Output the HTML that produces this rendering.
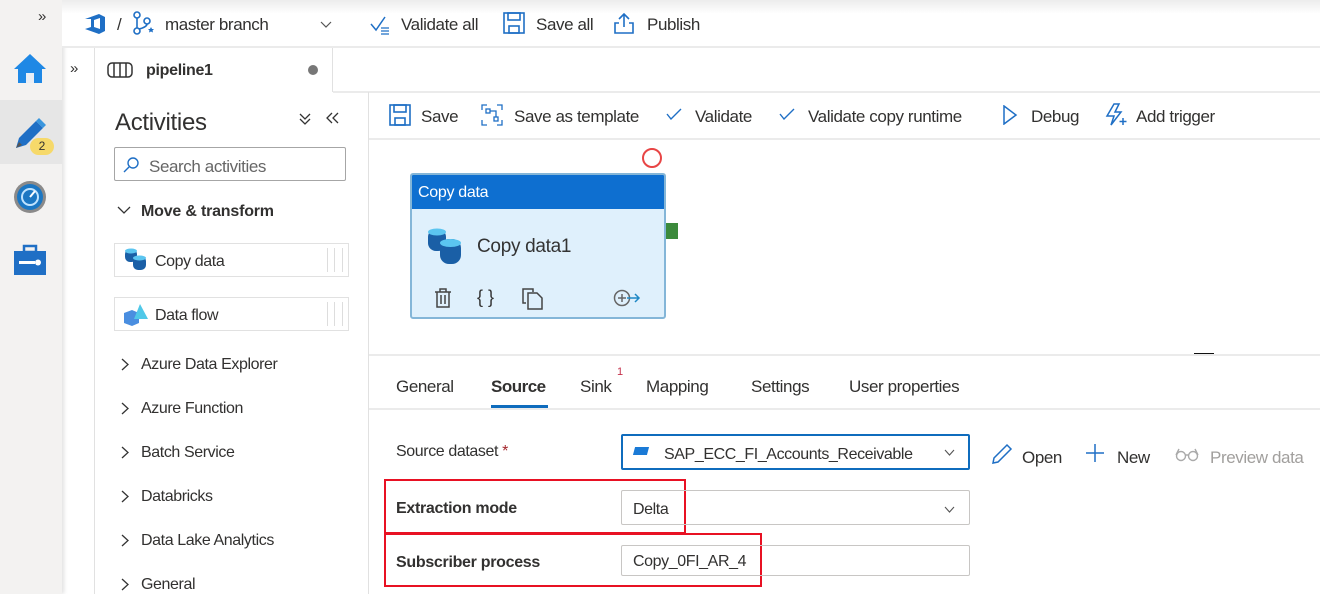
<!DOCTYPE html>
<html><head><meta charset="utf-8"><style>
*{margin:0;padding:0;box-sizing:border-box}
body{width:1320px;height:594px;overflow:hidden;background:#fff;font-family:"Segoe UI","Liberation Sans",sans-serif;color:#323130;position:relative}
.a{position:absolute;white-space:nowrap}
.t{font-size:17px;letter-spacing:-0.4px;margin-top:2px}
svg{position:absolute}
</style></head><body>
<!-- left rail -->
<div class="a" style="left:0;top:0;width:62px;height:594px;background:#f3f2f1;box-shadow:2px 0 4px rgba(0,0,0,.12)"></div>
<div class="a" style="left:0;top:100px;width:62px;height:64px;background:#e6e6e6"></div>
<div class="a" style="left:38px;top:8px;font-size:15px">»</div>
<svg style="left:13px;top:52px" width="34" height="32" viewBox="0 0 34 32"><path d="M17 2 L33 17 L29 17 L29 31 L5 31 L5 17 L1 17Z" fill="#1e88e5"/><rect x="13" y="21" width="8" height="10" fill="#e8eef6"/></svg>
<svg style="left:12px;top:116px" width="36" height="36" viewBox="0 0 36 36"><path d="M4 32 L7 22 L24 5 L31 12 L14 29Z" fill="#1f6fc5"/><path d="M24 5 L27 2 L34 9 L31 12Z" fill="#3a96dd"/><path d="M4 32 L7 26 L10 29Z" fill="#555"/></svg>
<div class="a" style="left:30px;top:138px;width:24px;height:17px;border-radius:9px;background:#f6d96a;font-size:12px;text-align:center;line-height:17px">2</div>
<svg style="left:13px;top:180px" width="34" height="34" viewBox="0 0 34 34"><circle cx="17" cy="17" r="16" fill="#8a8a8a"/><circle cx="17" cy="17" r="13" fill="#1c77c3"/><circle cx="17" cy="17" r="8" fill="none" stroke="#bfe3ff" stroke-width="2"/><path d="M17 17 L22 11" stroke="#fff" stroke-width="2"/></svg>
<svg style="left:13px;top:244px" width="34" height="32" viewBox="0 0 34 32"><rect x="11" y="2" width="12" height="6" fill="none" stroke="#1f6fc5" stroke-width="2.5"/><rect x="1" y="7" width="32" height="24" fill="#1f6fc5"/><rect x="6" y="17" width="16" height="3" fill="#fff"/><circle cx="25" cy="18.5" r="3" fill="#fff"/></svg>

<!-- top bar -->
<div class="a" style="left:62px;top:0;width:1258px;height:48px;background:linear-gradient(#ececec,#fff 30%);border-bottom:2px solid #ebebeb"></div>
<svg style="left:83px;top:13px" width="24" height="22" viewBox="0 0 24 22"><path d="M2 6 L16 1 L22 4 L22 18 L16 21 L2 16 L8 14 L8 6Z" fill="#1f6fc5"/><path d="M11 7 L17 5 L17 16 L11 14Z" fill="#fff"/></svg>
<div class="a t" style="left:117px;top:13px">/</div>
<svg style="left:132px;top:11px" width="24" height="24" viewBox="0 0 24 24" fill="none" stroke="#1f6fc5" stroke-width="1.6"><circle cx="5" cy="4" r="3"/><circle cx="5" cy="20" r="3"/><circle cx="15" cy="10" r="3"/><path d="M5 7 V17 M15 13 Q15 16 7 18"/><path d="M19 16 l1 2 2 0 -1.5 1.5 .5 2 -2-1 -2 1 .5-2 -1.5-1.5 2 0z" fill="#1f6fc5" stroke="none"/></svg>
<div class="a t" style="left:165px;top:13px">master branch</div>
<svg style="left:320px;top:21px" width="12" height="8" viewBox="0 0 12 8" fill="none" stroke="#555" stroke-width="1.2"><path d="M1 1 L6 6 L11 1"/></svg>
<svg style="left:370px;top:15px" width="22" height="20" viewBox="0 0 22 20" fill="none" stroke="#1f6fc5" stroke-width="1.5"><path d="M1 9 L6 15 L15 2"/><path d="M11 13h8M11 16h8M11 19h8" stroke-width="1.2"/></svg>
<div class="a t" style="left:401px;top:13px">Validate all</div>
<svg style="left:503px;top:12px" width="22" height="22" viewBox="0 0 22 22" fill="none" stroke="#1f6fc5" stroke-width="1.6"><rect x="1" y="1" width="20" height="20"/><rect x="5" y="1" width="12" height="7"/><rect x="6" y="14" width="10" height="7"/></svg>
<div class="a t" style="left:536px;top:13px">Save all</div>
<svg style="left:613px;top:12px" width="22" height="22" viewBox="0 0 22 22" fill="none" stroke="#1f6fc5" stroke-width="1.6"><path d="M11 15 V2 M6 7 L11 2 L16 7 M6 11 H2 V21 H20 V11 H16"/></svg>
<div class="a t" style="left:647px;top:13px">Publish</div>

<!-- second row -->
<div class="a" style="left:62px;top:48px;width:33px;height:546px;border-right:1px solid #e1e1e1"></div>
<div class="a" style="left:70px;top:60px;font-size:15px">»</div>
<div class="a" style="left:95px;top:48px;width:238px;height:44px;border-right:1px solid #e1e1e1"></div>
<div class="a" style="left:333px;top:91px;width:987px;height:2px;background:#ebebeb"></div>
<svg style="left:107px;top:62px" width="26" height="16" viewBox="0 0 26 16" fill="none" stroke="#333" stroke-width="1.5"><rect x="1" y="1" width="24" height="14" rx="4"/><path d="M7 1v14M13 1v14M19 1v14"/></svg>
<div class="a" style="left:146px;top:62px;font-size:16px;font-weight:bold;letter-spacing:-.3px">pipeline1</div>
<div class="a" style="left:308px;top:65px;width:10px;height:10px;border-radius:50%;background:#777"></div>

<!-- activities panel -->
<div class="a" style="left:368px;top:92px;width:1px;height:502px;background:#e1e1e1"></div>
<div class="a" style="left:115px;top:109px;font-size:24px;letter-spacing:-.3px">Activities</div>
<svg style="left:299px;top:112px" width="12" height="14" viewBox="0 0 12 14" fill="none" stroke="#333" stroke-width="1.3"><path d="M1 2 L6 7 L11 2 M1 7 L6 12 L11 7"/></svg>
<svg style="left:325px;top:112px" width="14" height="12" viewBox="0 0 14 12" fill="none" stroke="#333" stroke-width="1.3"><path d="M7 1 L2 6 L7 11 M13 1 L8 6 L13 11"/></svg>
<div class="a" style="left:114px;top:147px;width:232px;height:34px;border:1px solid #a6a6a6;border-radius:2px"></div>
<svg style="left:123px;top:157px" width="16" height="16" viewBox="0 0 16 16" fill="none" stroke="#1f6fc5" stroke-width="1.4"><circle cx="10" cy="6" r="5"/><path d="M6 10 L1 15"/></svg>
<div class="a t" style="left:149px;top:155px;color:#666">Search activities</div>
<svg style="left:117px;top:206px" width="14" height="9" viewBox="0 0 14 9" fill="none" stroke="#333" stroke-width="1.3"><path d="M1 1 L7 7 L13 1"/></svg>
<div class="a t" style="left:141px;top:201px;font-weight:bold;font-size:16px;letter-spacing:-.2px">Move &amp; transform</div>
<div class="a" style="left:114px;top:243px;width:235px;height:34px;border:1px solid #e1e1e1"></div>
<div class="a" style="left:114px;top:297px;width:235px;height:34px;border:1px solid #e1e1e1"></div>
<div class="a" style="left:327px;top:248px;width:16px;height:24px;border-left:1px solid #ddd;border-right:1px solid #ddd"><div style="margin-left:6px;width:1px;height:24px;background:#ddd"></div></div>
<div class="a" style="left:327px;top:302px;width:16px;height:24px;border-left:1px solid #ddd;border-right:1px solid #ddd"><div style="margin-left:6px;width:1px;height:24px;background:#ddd"></div></div>
<svg style="left:124px;top:248px" width="24" height="24" viewBox="0 0 24 24"><rect x="1" y="1" width="12" height="13" rx="5" fill="#1a5fa6"/><ellipse cx="7" cy="3" rx="6" ry="2.5" fill="#5bc5f0"/><rect x="9" y="8" width="13" height="14" rx="5" fill="#1a5fa6"/><ellipse cx="15.5" cy="10" rx="6.5" ry="2.5" fill="#5bc5f0"/></svg>
<div class="a t" style="left:155px;top:251px;font-size:16px">Copy data</div>
<svg style="left:122px;top:301px" width="28" height="26" viewBox="0 0 28 26"><path d="M2 12 L10 9 L17 12 L17 22 L10 25 L2 22Z" fill="#4a8ee0"/><path d="M18 3 L26 18 L12 18Z" fill="#50c8e8"/></svg>
<div class="a t" style="left:155px;top:305px;font-size:16px">Data flow</div>
<svg style="left:121px;top:358px" width="8" height="13" viewBox="0 0 8 13" fill="none" stroke="#333" stroke-width="1.3"><path d="M1 1 L7 6.5 L1 12"/></svg><div class="a t" style="left:141px;top:354px;font-size:16px">Azure Data Explorer</div>
<svg style="left:121px;top:402px" width="8" height="13" viewBox="0 0 8 13" fill="none" stroke="#333" stroke-width="1.3"><path d="M1 1 L7 6.5 L1 12"/></svg><div class="a t" style="left:141px;top:398px;font-size:16px">Azure Function</div>
<svg style="left:121px;top:446px" width="8" height="13" viewBox="0 0 8 13" fill="none" stroke="#333" stroke-width="1.3"><path d="M1 1 L7 6.5 L1 12"/></svg><div class="a t" style="left:141px;top:442px;font-size:16px">Batch Service</div>
<svg style="left:121px;top:490px" width="8" height="13" viewBox="0 0 8 13" fill="none" stroke="#333" stroke-width="1.3"><path d="M1 1 L7 6.5 L1 12"/></svg><div class="a t" style="left:141px;top:486px;font-size:16px">Databricks</div>
<svg style="left:121px;top:534px" width="8" height="13" viewBox="0 0 8 13" fill="none" stroke="#333" stroke-width="1.3"><path d="M1 1 L7 6.5 L1 12"/></svg><div class="a t" style="left:141px;top:530px;font-size:16px">Data Lake Analytics</div>
<svg style="left:121px;top:578px" width="8" height="13" viewBox="0 0 8 13" fill="none" stroke="#333" stroke-width="1.3"><path d="M1 1 L7 6.5 L1 12"/></svg><div class="a t" style="left:141px;top:574px;font-size:16px">General</div>

<!-- toolbar -->
<div class="a" style="left:369px;top:138px;width:951px;height:2px;background:#ebebeb"></div>
<svg style="left:389px;top:104px" width="22" height="22" viewBox="0 0 22 22" fill="none" stroke="#1f6fc5" stroke-width="1.6"><rect x="1" y="1" width="20" height="20"/><rect x="5" y="1" width="12" height="7"/><rect x="6" y="14" width="10" height="7"/></svg>
<div class="a t" style="left:421px;top:105px">Save</div>
<svg style="left:481px;top:104px" width="22" height="22" viewBox="0 0 22 22" fill="none" stroke="#1f6fc5" stroke-width="1.3"><path d="M1 6V1h5M16 1h5v5M21 16v5h-5M6 21H1v-5"/><rect x="5" y="5" width="4" height="4"/><rect x="13" y="13" width="4" height="4"/><path d="M9 7h6v6"/></svg>
<div class="a t" style="left:514px;top:105px">Save as template</div>
<svg style="left:666px;top:108px" width="16" height="12" viewBox="0 0 16 12" fill="none" stroke="#1f6fc5" stroke-width="1.4"><path d="M1 6 L5 11 L15 1"/></svg>
<div class="a t" style="left:695px;top:105px">Validate</div>
<svg style="left:779px;top:108px" width="16" height="12" viewBox="0 0 16 12" fill="none" stroke="#1f6fc5" stroke-width="1.4"><path d="M1 6 L5 11 L15 1"/></svg>
<div class="a t" style="left:808px;top:105px">Validate copy runtime</div>
<svg style="left:1002px;top:105px" width="16" height="20" viewBox="0 0 16 20" fill="none" stroke="#1f6fc5" stroke-width="1.5"><path d="M2 1 L14 10 L2 19Z"/></svg>
<div class="a t" style="left:1031px;top:105px">Debug</div>
<svg style="left:1104px;top:103px" width="24" height="24" viewBox="0 0 24 24" fill="none" stroke="#1f6fc5" stroke-width="1.5"><path d="M10 1 L3 13 H10 L7 22 L17 9 H11 L15 1Z"/><path d="M19 15v7M15.5 18.5h7"/></svg>
<div class="a t" style="left:1136px;top:105px">Add trigger</div>

<!-- canvas -->
<div class="a" style="left:642px;top:148px;width:20px;height:20px;border:2px solid #e84545;border-radius:50%"></div>
<div class="a" style="left:410px;top:173px;width:256px;height:146px;border:2px solid #84b6d8;border-radius:3px;background:#dff0fc;overflow:hidden">
 <div style="height:34px;background:#0e6fd0;color:#fff;font-size:16px;padding:9px 0 0 6px;letter-spacing:-.3px">Copy data</div>
</div>
<div class="a" style="left:666px;top:223px;width:12px;height:16px;background:#3c8a3c"></div>
<svg style="left:427px;top:227px" width="36" height="38" viewBox="0 0 36 38"><rect x="1" y="2" width="18" height="22" rx="8" fill="#1a5fa6"/><ellipse cx="10" cy="5" rx="9" ry="3.5" fill="#5bc5f0"/><rect x="13" y="12" width="21" height="25" rx="9" fill="#1a5fa6"/><ellipse cx="23.5" cy="16" rx="10.5" ry="4" fill="#5bc5f0"/></svg>
<div class="a" style="left:477px;top:236px;font-size:19px;letter-spacing:-.3px;color:#333">Copy data1</div>
<svg style="left:434px;top:288px" width="18" height="20" viewBox="0 0 18 20" fill="none" stroke="#444" stroke-width="1.5"><path d="M1 4h16M6 4V1h6v3M3 4v15h12V4M7 7v9M11 7v9"/></svg>
<div class="a" style="left:477px;top:287px;font-size:18px;color:#333">{ }</div>
<svg style="left:522px;top:288px" width="22" height="22" viewBox="0 0 22 22" fill="none" stroke="#444" stroke-width="1.5"><path d="M4 15H1V1h10v3"/><path d="M6 5h9l5 5v11H6Z"/></svg>
<svg style="left:613px;top:289px" width="28" height="18" viewBox="0 0 28 18" fill="none" stroke-width="1.5"><circle cx="9" cy="9" r="7.5" stroke="#666"/><path d="M9 5v8M5 9h8" stroke="#666"/><path d="M14 9h12M22 5l4 4-4 4" stroke="#1f88c5"/></svg>
<div class="a" style="left:1194px;top:353px;width:20px;height:3px;background:#111"></div>
<div class="a" style="left:369px;top:354px;width:951px;height:2px;background:#ebebeb"></div>

<!-- tabs -->
<div class="a t" style="left:396px;top:375px">General</div>
<div class="a t" style="left:491px;top:375px;font-weight:bold;letter-spacing:-.5px">Source</div>
<div class="a" style="left:491px;top:405px;width:57px;height:3px;background:#0f6cbd"></div>
<div class="a t" style="left:580px;top:375px">Sink</div>
<div class="a" style="left:617px;top:366px;font-size:11px;color:#c4314b">1</div>
<div class="a t" style="left:646px;top:375px">Mapping</div>
<div class="a t" style="left:751px;top:375px">Settings</div>
<div class="a t" style="left:849px;top:375px">User properties</div>
<div class="a" style="left:369px;top:408px;width:951px;height:2px;background:#ebebeb"></div>

<!-- form -->
<div class="a t" style="left:396px;top:441px;font-size:16px">Source dataset <span style="color:#a4262c">*</span></div>
<div class="a" style="left:621px;top:434px;width:349px;height:36px;border:2px solid #0f6cbd;border-radius:2px"></div>
<div class="a" style="left:634px;top:447px;width:14px;height:8px;background:#1a7ad6;transform:skewX(-15deg)"></div>
<div class="a t" style="left:664px;top:444px;font-size:16px">SAP_ECC_FI_Accounts_Receivable</div>
<svg style="left:944px;top:449px" width="11" height="7" viewBox="0 0 11 7" fill="none" stroke="#555" stroke-width="1.1"><path d="M1 1 L5.5 6 L10 1"/></svg>
<svg style="left:991px;top:443px" width="22" height="22" viewBox="0 0 22 22" fill="none" stroke="#1f6fc5" stroke-width="1.5"><path d="M2 20 L3 15 L16 2 L20 6 L7 19Z"/></svg>
<div class="a t" style="left:1022px;top:446px">Open</div>
<svg style="left:1086px;top:444px" width="18" height="18" viewBox="0 0 18 18" fill="none" stroke="#1f6fc5" stroke-width="1.5"><path d="M9 0v18M0 9h18"/></svg>
<div class="a t" style="left:1117px;top:446px">New</div>
<svg style="left:1175px;top:448px" width="24" height="14" viewBox="0 0 24 14" fill="none" stroke="#aaa" stroke-width="1.4"><circle cx="6" cy="8" r="4.5"/><circle cx="18" cy="8" r="4.5"/><path d="M10 7h4M1 7 L4 1M23 7 L20 1"/></svg>
<div class="a t" style="left:1210px;top:446px;color:#a19f9d">Preview data</div>

<div class="a" style="left:384px;top:479px;width:302px;height:55px;border:2px solid #e81123"></div>
<div class="a t" style="left:396px;top:498px;font-size:16px;font-weight:bold;letter-spacing:-.3px">Extraction mode</div>
<div class="a" style="left:621px;top:490px;width:349px;height:35px;border:1px solid #c8c6c4;border-radius:2px"></div>
<div class="a t" style="left:633px;top:499px;font-size:16px">Delta</div>
<svg style="left:944px;top:506px" width="11" height="7" viewBox="0 0 11 7" fill="none" stroke="#555" stroke-width="1.1"><path d="M1 1 L5.5 6 L10 1"/></svg>

<div class="a" style="left:384px;top:533px;width:378px;height:54px;border:2px solid #e81123"></div>
<div class="a t" style="left:396px;top:552px;font-size:16px;font-weight:bold;letter-spacing:-.3px">Subscriber process</div>
<div class="a" style="left:621px;top:545px;width:349px;height:31px;border:1px solid #c8c6c4;border-radius:2px"></div>
<div class="a t" style="left:633px;top:551px;font-size:16px">Copy_0FI_AR_4</div>
</body></html>
